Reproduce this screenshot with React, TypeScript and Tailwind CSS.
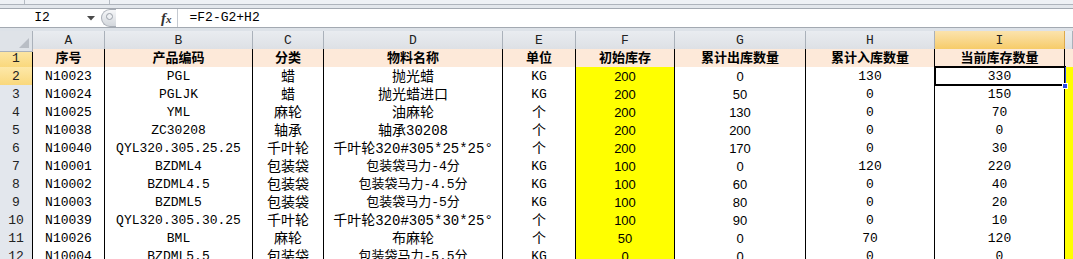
import React from 'react';

const GRID = 'grid grid-cols-[33px_72px_148px_71px_179px_73px_99px_131px_129px_130px_1fr]';
const MONO = "font-['Liberation_Mono','Noto_Sans_CJK_SC',monospace]";
const SANS = "font-['Liberation_Sans','Noto_Sans_CJK_SC',sans-serif]";

const letters = ['A', 'B', 'C', 'D', 'E', 'F', 'G', 'H', 'I', 'J'];

const header = ['序号', '产品编码', '分类', '物料名称', '单位', '初始库存', '累计出库数量', '累计入库数量', '当前库存数量'];

const rows: string[][] = [
  ['N10023', 'PGL', '蜡', '抛光蜡', 'KG', '200', '0', '130', '330'],
  ['N10024', 'PGLJK', '蜡', '抛光蜡进口', 'KG', '200', '50', '0', '150'],
  ['N10025', 'YML', '麻轮', '油麻轮', '个', '200', '130', '0', '70'],
  ['N10038', 'ZC30208', '轴承', '轴承30208', '个', '200', '200', '0', '0'],
  ['N10040', 'QYL320.305.25.25', '千叶轮', '千叶轮320#305*25*25°', '个', '200', '170', '0', '30'],
  ['N10001', 'BZDML4', '包装袋', '包装袋马力-4分', 'KG', '100', '0', '120', '220'],
  ['N10002', 'BZDML4.5', '包装袋', '包装袋马力-4.5分', 'KG', '100', '60', '0', '40'],
  ['N10003', 'BZDML5', '包装袋', '包装袋马力-5分', 'KG', '100', '80', '0', '20'],
  ['N10039', 'QYL320.305.30.25', '千叶轮', '千叶轮320#305*30*25°', '个', '100', '90', '0', '10'],
  ['N10026', 'BML', '麻轮', '布麻轮', '个', '50', '0', '70', '120'],
  ['N10004', 'BZDML5.5', '包装袋', '包装袋马力-5.5分', 'KG', '0', '0', '0', '0'],
];

// font per data column
const colFont = (ci: number, text: string) => {
  if (ci === 5 || ci === 6) return `${SANS} text-[13px]`;
  if (ci === 3) return text.startsWith('包装袋马力') ? `${MONO} text-[13px]` : `${MONO} text-[14px]`;
  if (ci === 2 || text === '个') return `${MONO} text-[14px]`;
  return `${MONO} text-[13px]`;
};

const FormulaBar = () => (
  <div className="h-[31px] bg-[#dde2e8] flex flex-col">
    <div className="h-[4px] flex bg-[#eef1f5]">
      <div className="w-[25px] border-r border-[#b5bbc3]" />
      <div className="w-[85px] border-r border-[#b5bbc3]" />
    </div>
    <div className="h-[1px] bg-[#aeb4bc]" />
    <div className="h-[3px] bg-[#e3e7ec]" />
    <div className="h-[20px] bg-white border-y border-[#a3a9b1] flex items-center">
      <div className="w-[84px] flex justify-center">
        <span className={`${MONO} text-[13px] text-black`}>I2</span>
      </div>
      <svg width="8" height="5" viewBox="0 0 8 5" className="ml-[3px]">
        <polygon points="0,0 8,0 4,4.5" fill="#4a4a4a" />
      </svg>
      <div className="ml-[6px] w-[15px] h-[18px] rounded-l-full border border-r-0 border-[#a9aeb6] bg-gradient-to-b from-[#f6f7f9] to-[#d3d7dc] flex items-start justify-center pt-[3px]">
        <div className="w-[7px] h-[7px] rounded-full border border-[#9aa0a8] bg-[#eef0f3]" />
      </div>
      <div className="w-[45px]" />
      <span className="font-['Liberation_Serif',serif] italic font-bold text-[15px] text-[#333] leading-none">
        f<span className="text-[11px]">x</span>
      </span>
      <div className="ml-[5px] w-[1px] h-full bg-[#c5cad1]" />
      <span className={`${MONO} text-[13px] text-black ml-[12px]`}>=F2-G2+H2</span>
    </div>
    <div className="h-[3px]" />
  </div>
);

const ColumnHeaders = () => (
  <div className={`${GRID} h-[18px]`}>
    <div className="relative bg-[#dfe3e8] border-r border-b border-[#aab1ba]">
      <svg width="10" height="10" viewBox="0 0 10 10" className="absolute right-[3px] bottom-[3px]">
        <polygon points="10,0 10,10 0,10" fill="#b9bec5" />
      </svg>
    </div>
    {letters.map((l) =>
      l === 'I' ? (
        <div key={l} className={`${MONO} text-[13px] text-[#222] flex items-center justify-center bg-gradient-to-b from-[#fbe3ad] to-[#f6c95f] border-r border-b border-[#dea94a]`}>
          {l}
        </div>
      ) : (
        <div key={l} className={`${MONO} text-[13px] text-[#222] flex items-center justify-center bg-gradient-to-b from-[#e9ecf0] to-[#dcdfe4] border-r border-b border-[#aab1ba]`}>
          {l === 'J' ? '' : l}
        </div>
      )
    )}
  </div>
);

const RowHead = ({ n, active }: { n: number; active: boolean }) => (
  <div
    className={
      active
        ? `${MONO} text-[13px] text-[#222] flex items-center justify-center bg-gradient-to-b from-[#fde8a8] to-[#f9d677] border-b border-[#e2b658] border-r border-r-black`
        : `${MONO} text-[13px] text-[#222] flex items-center justify-center bg-[#e3e7ed] border-b border-[#b4bbc5] border-r border-r-black`
    }
  >
    {n}
  </div>
);

export default function App() {
  return (
    <div className="w-[1073px] h-[259px] overflow-hidden bg-white">
      <FormulaBar />
      <div className="relative">
        <ColumnHeaders />
        <div className={`${GRID} h-[18px]`}>
          <RowHead n={1} active />
          {header.map((h, i) => (
            <div
              key={i}
              className={`${MONO} font-bold text-[13px] text-black flex items-center justify-center whitespace-nowrap overflow-hidden bg-[#fde9d9] border-r border-b border-black`}
            >
              {h}
            </div>
          ))}
          <div className="bg-[#fde9d9] border-b border-[#e6d2c4]" />
        </div>
        {rows.map((r, ri) => (
          <div key={ri} className={`${GRID} h-[18px]`}>
            <RowHead n={ri + 2} active={ri === 0} />
            {r.map((c, ci) => (
              <div
                key={ci}
                className={`${colFont(ci, c)} text-black leading-none flex items-center justify-center whitespace-nowrap overflow-hidden border-r border-b border-black ${ci === 5 ? 'bg-[#ffff00]' : 'bg-white'}`}
              >
                {c}
              </div>
            ))}
            <div className="bg-[#ffff00]" />
          </div>
        ))}
        {/* selection on I2 */}
        <div className="absolute left-[934px] top-[35px] w-[132px] h-[20px] border-2 border-black shadow-[inset_0_0_0_1px_#ffffff]" />
        <div className="absolute left-[1065px] top-[36px] w-[1px] h-[17px] bg-[#2a4be8]" />
        <div className="absolute left-[1062px] top-[52px] w-[6px] h-[6px] bg-[#2a4be8] border border-white" />
      </div>
    </div>
  );
}
